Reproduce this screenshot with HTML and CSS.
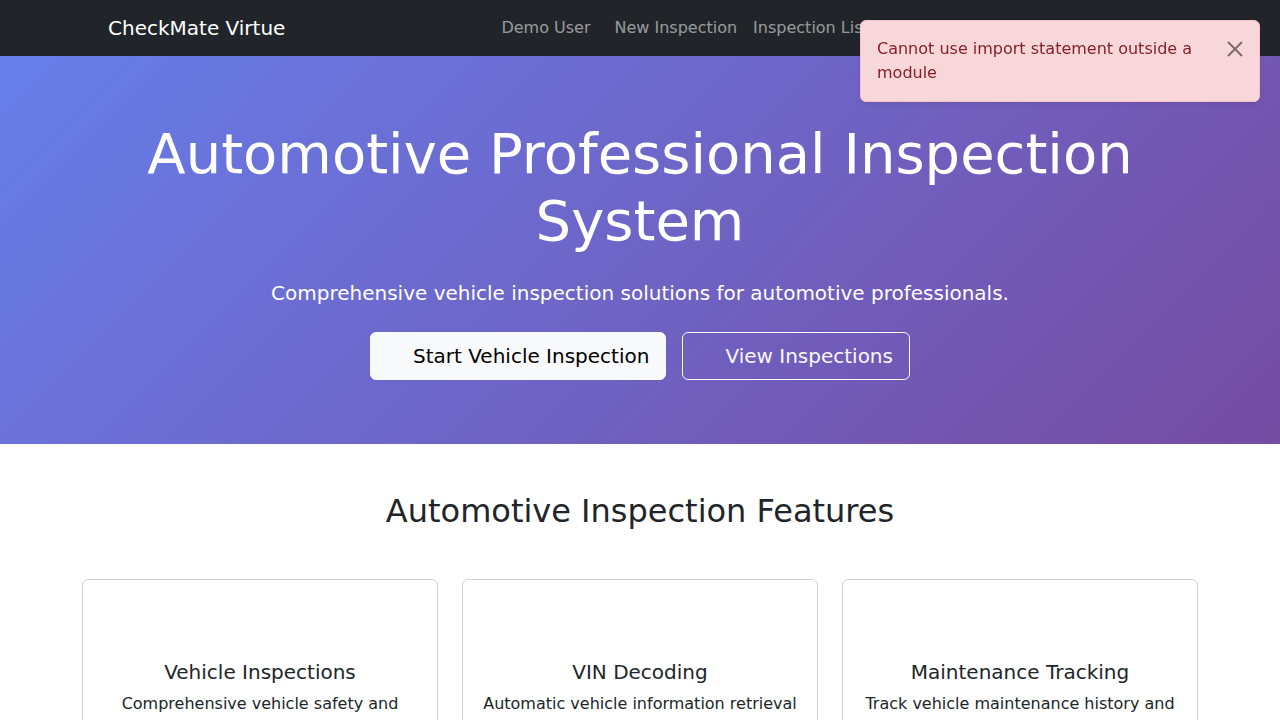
FILE: index.html
```html
<!DOCTYPE html>
<html lang="en">
<head>
<meta charset="utf-8">
<title>CheckMate Virtue</title>
<link rel="stylesheet" href="styles.css">
</head>
<body>
<nav class="navbar">
  <div class="container nav-inner">
    <a class="brand" href="#"><span class="icon-slot"></span>CheckMate Virtue</a>
    <div class="nav-items">
      <span class="nav-text">Demo User</span>
      <a class="nav-link" href="#">New Inspection</a>
      <a class="nav-link" href="#">Inspection List</a>
      <a class="nav-link" href="#">Logout</a>
    </div>
  </div>
</nav>

<div class="toast-alert" role="alert">
  <span class="toast-msg">Cannot use import statement outside a module</span>
  <button class="btn-close" type="button" aria-label="Close">
    <svg width="16" height="16" viewBox="0 0 16 16"><path d="M1 1l14 14M15 1L1 15" stroke="currentColor" stroke-width="2" fill="none"/></svg>
  </button>
</div>

<section class="hero">
  <div class="container hero-inner">
    <h1 class="hero-title">Automotive Professional Inspection System</h1>
    <p class="lead">Comprehensive vehicle inspection solutions for automotive professionals.</p>
    <div class="hero-actions">
      <a class="btn btn-light" href="#"><span class="icon-slot"></span>Start Vehicle Inspection</a>
      <a class="btn btn-outline" href="#"><span class="icon-slot"></span>View Inspections</a>
    </div>
  </div>
</section>

<section class="features">
  <div class="container">
    <h2 class="section-title">Automotive Inspection Features</h2>
    <div class="cards">
      <div class="card">
        <div class="card-icon"></div>
        <h5 class="card-title">Vehicle Inspections</h5>
        <p class="card-text">Comprehensive vehicle safety and compliance inspections with detailed reports.</p>
      </div>
      <div class="card">
        <div class="card-icon"></div>
        <h5 class="card-title">VIN Decoding</h5>
        <p class="card-text">Automatic vehicle information retrieval from VIN numbers.</p>
      </div>
      <div class="card">
        <div class="card-icon"></div>
        <h5 class="card-title">Maintenance Tracking</h5>
        <p class="card-text">Track vehicle maintenance history and schedule upcoming services.</p>
      </div>
    </div>
  </div>
</section>
</body>
</html>
```

FILE: styles.css
```css
* { box-sizing: border-box; }
html, body { margin: 0; padding: 0; }
body {
  font-family: "DejaVu Sans", sans-serif;
  font-size: 16px;
  line-height: 1.5;
  color: #212529;
  background: #fff;
}
a { text-decoration: none; }
.container {
  width: 1140px;
  margin: 0 auto;
  padding: 0 12px;
}
.icon-slot {
  display: inline-block;
  width: 18px;
  margin-right: 8px;
}

/* navbar */
.navbar {
  background: #212529;
  padding: 8px 0;
}
.nav-inner {
  display: flex;
  align-items: center;
}
.brand {
  color: #fff;
  font-size: 20px;
  line-height: 30px;
  padding: 5px 0;
  margin-right: 16px;
  white-space: nowrap;
}
.nav-items {
  display: flex;
  align-items: center;
  margin-left: 200px;
  white-space: nowrap;
}
.nav-text {
  color: rgba(255,255,255,.55);
  margin-right: 16px;
  padding: 8px 0;
}
.nav-link {
  color: rgba(255,255,255,.55);
  padding: 8px;
}

/* toast */
.toast-alert {
  position: fixed;
  top: 20px;
  right: 20px;
  width: 400px;
  z-index: 10;
  background: #f8d7da;
  border: 1px solid #f5c2c7;
  color: #842029;
  border-radius: 6px;
  padding: 16px 48px 16px 16px;
  box-shadow: 0 2px 6px rgba(0,0,0,.08);
}
.btn-close {
  position: absolute;
  top: 0;
  right: 0;
  border: 0;
  background: transparent;
  color: #000;
  opacity: .5;
  padding: 20px 16px;
  line-height: 0;
  cursor: pointer;
}
.btn-close svg { display: block; width: 16px; height: 16px; }

/* hero */
.hero {
  background: linear-gradient(135deg, #667eea 0%, #764ba2 100%);
  color: #fff;
  padding: 64px 0;
  text-align: center;
}
.hero-title {
  font-size: 56px;
  font-weight: 400;
  line-height: 1.2;
  margin: 0 0 24px;
}
.lead {
  font-size: 20px;
  line-height: 30px;
  margin: 0 0 24px;
}
.hero-actions {
  display: flex;
  justify-content: center;
  gap: 16px;
}
.btn {
  display: inline-block;
  font-size: 20px;
  line-height: 30px;
  padding: 8px 16px;
  border-radius: 6px;
  border: 1px solid transparent;
}
.btn-light {
  background: #f8f9fa;
  border-color: #f8f9fa;
  color: #000;
}
.btn-outline {
  color: #f8f9fa;
  border-color: #f8f9fa;
}

/* features */
.features {
  padding: 48px 0;
}
.section-title {
  text-align: center;
  font-size: 32px;
  font-weight: 500;
  line-height: 1.2;
  margin: 0 0 48px;
}
.cards {
  display: grid;
  grid-template-columns: repeat(3, 1fr);
  gap: 24px;
}
.card {
  border: 1px solid rgba(0,0,0,.175);
  border-radius: 6px;
  padding: 16px;
  text-align: center;
}
.card-icon {
  height: 48px;
  margin-bottom: 16px;
}
.card-title {
  font-size: 20px;
  font-weight: 500;
  line-height: 1.2;
  margin: 0 0 8px;
}
.card-text {
  margin: 0;
}
```
